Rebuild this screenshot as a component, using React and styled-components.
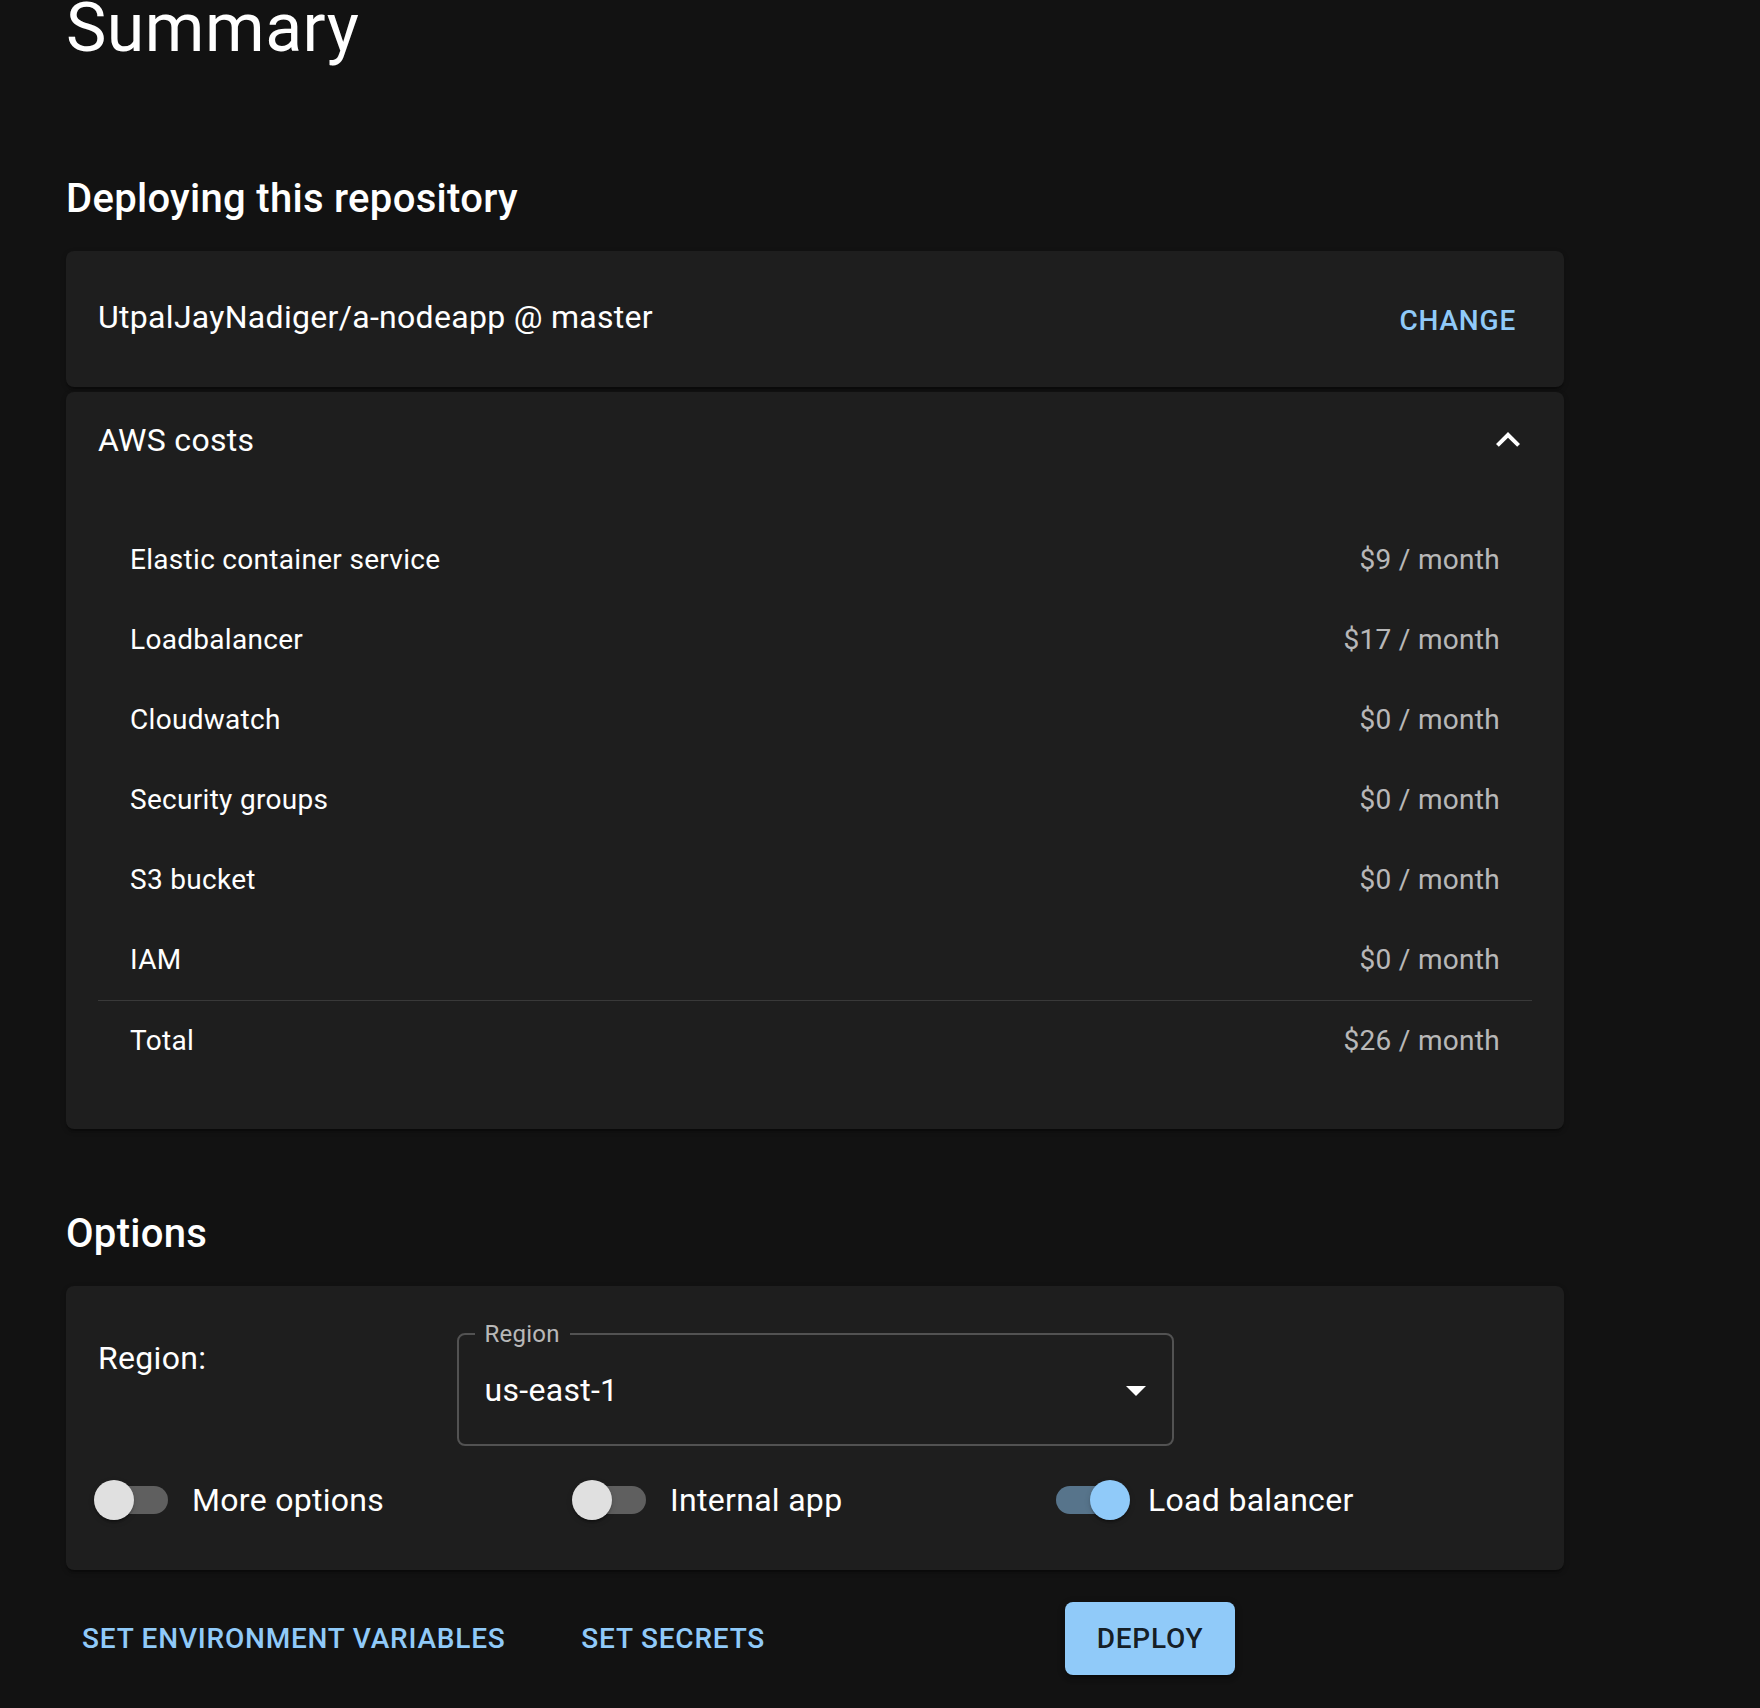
import React from 'react';
import styled, { createGlobalStyle } from 'styled-components';

const GlobalStyle = createGlobalStyle`
  html, body {
    margin: 0;
    background: #121212;
  }
  body {
    font-family: Roboto, "Noto Sans", "Liberation Sans", sans-serif;
    color: #fff;
  }
  * {
    box-sizing: border-box;
  }
`;

const Page = styled.div`
  width: 1498px;
  margin-left: 66px;
  padding-bottom: 40px;
`;

const Title = styled.h1`
  margin: -13px 0 96px;
  font-size: 68px;
  font-weight: 400;
  line-height: 1.235;
  letter-spacing: 0.00735em;
`;

const SectionTitle = styled.h2`
  margin: ${p => p.top || 0}px 0 20px;
  font-size: 40px;
  font-weight: 500;
  line-height: 1.6;
  letter-spacing: 0.0075em;
`;

const Card = styled.div`
  background: #1e1e1e;
  border-radius: 8px;
  box-shadow: 0 4px 2px -2px rgba(0, 0, 0, 0.2), 0 2px 2px 0 rgba(0, 0, 0, 0.14),
    0 2px 6px 0 rgba(0, 0, 0, 0.12);
  margin-top: ${p => p.top || 0}px;
`;

const RepoCard = styled(Card)`
  height: 136px;
  padding: 0 32px;
  display: flex;
  align-items: center;
  justify-content: space-between;
`;

const BodyText = styled.span`
  font-size: 32px;
  line-height: 1.5;
  letter-spacing: 0.00938em;
`;

const RepoName = styled(BodyText)`
  padding-bottom: 4px;
`;

const TextButton = styled.button`
  background: none;
  border: 0;
  border-radius: 8px;
  padding: 12px 16px;
  min-width: 128px;
  font-family: inherit;
  font-size: 28px;
  font-weight: 500;
  line-height: 1.75;
  letter-spacing: 0.02857em;
  text-transform: uppercase;
  color: #90caf9;
  cursor: pointer;
  justify-self: start;
  margin-top: ${p => p.mt || 0}px;
`;

const DeployButton = styled(TextButton)`
  background: #90caf9;
  color: rgba(0, 0, 0, 0.87);
  padding: 12px 32px;
  box-shadow: 0 6px 2px -4px rgba(0, 0, 0, 0.2), 0 4px 4px 0 rgba(0, 0, 0, 0.14),
    0 2px 10px 0 rgba(0, 0, 0, 0.12);
`;

const AccordionHead = styled.div`
  height: 96px;
  padding: 0 32px;
  display: flex;
  align-items: center;
  justify-content: space-between;
`;

const Details = styled.div`
  padding: 16px 32px 32px;
`;

const CostList = styled.div`
  padding: 16px 0;
`;

const CostRow = styled.div`
  height: 80px;
  padding: 0 32px;
  display: flex;
  align-items: center;
  justify-content: space-between;
  font-size: 28px;
  line-height: 1.43;
  letter-spacing: 0.01071em;
`;

const Price = styled.span`
  color: rgba(255, 255, 255, 0.7);
`;

const Divider = styled.div`
  height: 1px;
  background: rgba(255, 255, 255, 0.12);
`;

const OptionsCard = styled(Card)`
  padding: 32px;
`;

const RegionRow = styled.div`
  display: grid;
  grid-template-columns: 3fr 6fr 3fr;
`;

const RegionLabel = styled(BodyText)`
  padding-top: 16px;
`;

const SelectBox = styled.fieldset`
  margin: 4px 0 16px;
  padding: 0 12px 0 16px;
  border: 2px solid rgba(255, 255, 255, 0.23);
  border-radius: 8px;
  min-width: 0;
`;

const SelectLegend = styled.legend`
  padding: 0 10px;
  font-size: 24px;
  line-height: 24px;
  color: rgba(255, 255, 255, 0.7);
  letter-spacing: 0.00938em;
`;

const SelectValue = styled.div`
  display: flex;
  align-items: center;
  justify-content: space-between;
  padding: 21px 0 31px 10px;
  height: 98px;
`;

const SwitchRow = styled.div`
  display: grid;
  grid-template-columns: repeat(3, 1fr);
`;

const SwitchLabel = styled.label`
  display: inline-flex;
  align-items: center;
  margin-left: -22px;
`;

const SwitchRoot = styled.span`
  position: relative;
  width: 116px;
  height: 76px;
  padding: 24px;
  display: inline-flex;
  flex-shrink: 0;
`;

const Track = styled.span`
  width: 100%;
  height: 100%;
  border-radius: 14px;
  background: ${p => (p.on ? '#57748b' : '#5f5f5f')};
`;

const Thumb = styled.span`
  position: absolute;
  top: 18px;
  left: ${p => (p.on ? 58 : 18)}px;
  width: 40px;
  height: 40px;
  border-radius: 50%;
  background: ${p => (p.on ? '#90caf9' : '#e0e0e0')};
  box-shadow: 0 4px 2px -2px rgba(0, 0, 0, 0.2), 0 2px 2px 0 rgba(0, 0, 0, 0.14),
    0 2px 6px 0 rgba(0, 0, 0, 0.12);
`;

const ButtonRow = styled.div`
  margin-top: 32px;
  display: grid;
  grid-template-columns: repeat(3, 1fr);
`;

const costs = [
  ['Elastic container service', '$9 / month'],
  ['Loadbalancer', '$17 / month'],
  ['Cloudwatch', '$0 / month'],
  ['Security groups', '$0 / month'],
  ['S3 bucket', '$0 / month'],
  ['IAM', '$0 / month'],
];

const Toggle = ({ on, label }) => (
  <SwitchLabel>
    <SwitchRoot>
      <Track on={on ? 1 : 0} />
      <Thumb on={on ? 1 : 0} />
    </SwitchRoot>
    <BodyText>{label}</BodyText>
  </SwitchLabel>
);

const App = () => (
  <>
    <GlobalStyle />
    <Page>
      <Title>Summary</Title>
      <SectionTitle>Deploying this repository</SectionTitle>
      <RepoCard>
        <RepoName>UtpalJayNadiger/a-nodeapp @ master</RepoName>
        <TextButton mt={3}>Change</TextButton>
      </RepoCard>

      <Card top={5}>
        <AccordionHead>
          <BodyText>AWS costs</BodyText>
          <svg width="48" height="48" viewBox="0 0 24 24" fill="#fff">
            <path d="M12 8l-6 6 1.41 1.41L12 10.83l4.59 4.58L18 14z" />
          </svg>
        </AccordionHead>
        <Details>
          <CostList>
            {costs.map(([name, price]) => (
              <CostRow key={name}>
                <span>{name}</span>
                <Price>{price}</Price>
              </CostRow>
            ))}
            <Divider />
            <CostRow>
              <span>Total</span>
              <Price>$26 / month</Price>
            </CostRow>
          </CostList>
        </Details>
      </Card>

      <SectionTitle top={73}>Options</SectionTitle>
      <OptionsCard>
        <RegionRow>
          <RegionLabel>Region:</RegionLabel>
          <SelectBox>
            <SelectLegend>Region</SelectLegend>
            <SelectValue>
              <BodyText>us-east-1</BodyText>
              <svg width="48" height="48" viewBox="0 0 24 24" fill="#fff">
                <path d="M7 10l5 5 5-5z" />
              </svg>
            </SelectValue>
          </SelectBox>
        </RegionRow>
        <SwitchRow>
          <Toggle label="More options" />
          <Toggle label="Internal app" />
          <Toggle on label="Load balancer" />
        </SwitchRow>
      </OptionsCard>

      <ButtonRow>
        <div>
          <TextButton>Set environment variables</TextButton>
        </div>
        <div>
          <TextButton>Set secrets</TextButton>
        </div>
        <div>
          <DeployButton>Deploy</DeployButton>
        </div>
      </ButtonRow>
    </Page>
  </>
);

export default App;
